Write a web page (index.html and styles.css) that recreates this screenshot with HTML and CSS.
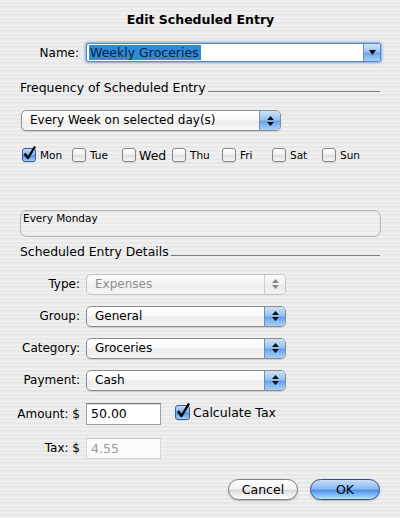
FILE: index.html
```html
<!DOCTYPE html>
<html>
<head>
<meta charset="utf-8">
<link rel="stylesheet" href="styles.css">
</head>
<body>
<div class="dialog">
  <h1 class="title">Edit Scheduled Entry</h1>

  <div class="name-row">
    <span class="name-lbl">Name:</span>
    <div class="combo">
      <span class="combo-text"><span class="sel">Weekly Groceries</span></span>
      <span class="combo-btn"><svg width="7" height="5" viewBox="0 0 7 5"><path d="M0 0H7L3.5 5Z" fill="#111"/></svg></span>
    </div>
  </div>

  <div class="section s1">
    <span class="section-title">Frequency of Scheduled Entry</span><span class="rule"></span>
  </div>

  <div class="popup freq">
    <span class="popup-text">Every Week on selected day(s)</span>
    <span class="popup-arrows"><svg width="7" height="10" viewBox="0 0 7 10"><path d="M3.5 0L7 4H0Z M0 6H7L3.5 10Z" fill="#111"/></svg></span>
  </div>

  <div class="days">
    <div class="day"><span class="cb checked"><svg class="tick" width="15" height="16" viewBox="0 0 15 16"><path d="M2.5 8.5 L6 13 L13 1.5" fill="none" stroke="#000" stroke-width="2.3" stroke-linejoin="round"/></svg></span><span class="day-lbl">Mon</span></div>
    <div class="day"><span class="cb"></span><span class="day-lbl">Tue</span></div>
    <div class="day"><span class="cb"></span><span class="day-lbl big">Wed</span></div>
    <div class="day"><span class="cb"></span><span class="day-lbl">Thu</span></div>
    <div class="day"><span class="cb"></span><span class="day-lbl">Fri</span></div>
    <div class="day"><span class="cb"></span><span class="day-lbl">Sat</span></div>
    <div class="day"><span class="cb"></span><span class="day-lbl">Sun</span></div>
  </div>

  <div class="summary">Every Monday</div>

  <div class="section s2">
    <span class="section-title">Scheduled Entry Details</span><span class="rule"></span>
  </div>

  <div class="form">
    <span class="lbl">Type:</span>
    <div class="popup disabled wide">
      <span class="popup-text">Expenses</span>
      <span class="popup-arrows"><svg width="7" height="10" viewBox="0 0 7 10"><path d="M3.5 0L7 4H0Z M0 6H7L3.5 10Z" fill="#888"/></svg></span>
    </div>

    <span class="lbl">Group:</span>
    <div class="popup wide">
      <span class="popup-text">General</span>
      <span class="popup-arrows"><svg width="7" height="10" viewBox="0 0 7 10"><path d="M3.5 0L7 4H0Z M0 6H7L3.5 10Z" fill="#111"/></svg></span>
    </div>

    <span class="lbl">Category:</span>
    <div class="popup wide">
      <span class="popup-text">Groceries</span>
      <span class="popup-arrows"><svg width="7" height="10" viewBox="0 0 7 10"><path d="M3.5 0L7 4H0Z M0 6H7L3.5 10Z" fill="#111"/></svg></span>
    </div>

    <span class="lbl">Payment:</span>
    <div class="popup wide">
      <span class="popup-text">Cash</span>
      <span class="popup-arrows"><svg width="7" height="10" viewBox="0 0 7 10"><path d="M3.5 0L7 4H0Z M0 6H7L3.5 10Z" fill="#111"/></svg></span>
    </div>

    <span class="lbl">Amount: $</span>
    <div class="amount-cell">
      <span class="field">50.00</span>
      <span class="calc"><span class="cb checked big-cb"><svg class="tick" width="16" height="17" viewBox="0 0 16 17"><path d="M3 9 L6.5 14 L14 1.5" fill="none" stroke="#000" stroke-width="2.4" stroke-linejoin="round"/></svg></span><span class="calc-lbl">Calculate Tax</span></span>
    </div>

    <span class="lbl">Tax: $</span>
    <div class="tax-cell">
      <span class="field disabled">4.55</span>
    </div>
  </div>

  <div class="buttons">
    <span class="btn cancel">Cancel</span>
    <span class="btn ok">OK</span>
  </div>
</div>
</body>
</html>
```

FILE: styles.css
```css
html, body {
  margin: 0;
  padding: 0;
}
body {
  width: 400px;
  height: 518px;
  overflow: hidden;
  background: repeating-linear-gradient(to bottom, #efefef 0, #efefef 2px, #e8e8e8 2px, #e8e8e8 4px);
  font-family: "DejaVu Sans", "Liberation Sans", sans-serif;
  font-size: 12px;
  color: #000;
}
.dialog {
  padding: 0 19px 0 20px;
}
.title {
  margin: 11px 0 0;
  font-size: 12.5px;
  font-weight: bold;
  line-height: 18px;
  text-align: center;
}

/* name row */
.name-row {
  display: flex;
  align-items: center;
  margin-top: 13px;
  height: 21px;
}
.name-lbl {
  width: 59px;
  text-align: right;
  margin-right: 7px;
}
.combo {
  flex: 1;
  display: flex;
  height: 19px;
  box-sizing: border-box;
  border: 1px solid #5f83b8;
  border-radius: 3px;
  background: #fff;
  box-shadow: 0 0 0 1px #9dbde4, 0 0 2px 2px #b3cdea;
}
.combo-text {
  flex: 1;
  padding-left: 2px;
  padding-top: 1px;
  line-height: 15px;
}
.sel {
  display: inline-block;
  background: #2e8ad9;
  color: #0a1d40;
  padding: 0 2px 0 1px;
  font-size: 12.5px;
}
.combo-btn {
  width: 16px;
  display: flex;
  align-items: center;
  justify-content: center;
  border-left: 1px solid #6d8fc0;
  border-radius: 0 2px 2px 0;
  background: linear-gradient(#d2e4f8, #9cc4f0 45%, #6ea6ea 55%, #a8d2fb);
}

/* section headers */
.section {
  display: flex;
  align-items: flex-start;
  height: 16px;
  line-height: 16px;
}
.s1 { margin-top: 17px; }
.s2 { margin-top: 7px; }
.section-title {
  font-size: 12.4px;
  white-space: nowrap;
}
.rule {
  flex: 1;
  height: 11px;
  margin-left: 2px;
  margin-right: 1px;
  border-bottom: 1px solid #7c7c7c;
}

/* popup buttons */
.popup {
  display: flex;
  height: 21px;
  box-sizing: border-box;
  border: 1px solid #8d8d8d;
  border-radius: 5px;
  overflow: hidden;
  background: linear-gradient(#ffffff, #f8f8f8 48%, #ececec 52%, #f6f6f6);
  box-shadow: 0 1px 1px rgba(0,0,0,0.12);
}
.popup-text {
  flex: 1;
  padding-left: 8px;
  line-height: 19px;
  font-size: 12px;
  white-space: nowrap;
}
.popup-arrows {
  width: 20px;
  display: flex;
  align-items: center;
  justify-content: center;
  border-left: 1px solid #6f90bf;
  background: linear-gradient(#cfe2f8, #98c2f0 45%, #6ba3ea 55%, #a7d3fc);
}
.popup.disabled {
  border-color: #c2c2c2;
  box-shadow: none;
  background: linear-gradient(#fbfbfb, #f4f4f4 50%, #eeeeee 52%, #f5f5f5);
}
.popup.disabled .popup-text { color: #8f8f8f; }
.popup.disabled .popup-arrows {
  border-left-color: #cfcfcf;
  background: linear-gradient(#fbfbfb, #f1f1f1 50%, #e8e8e8 52%, #f4f4f4);
}
.freq {
  margin-top: 14px;
  width: 260px;
  margin-left: 1px;
}
.wide {
  width: 200px;
}

/* days */
.days {
  display: flex;
  margin-top: 16px;
  height: 16px;
  padding-left: 2px;
}
.day {
  width: 50px;
  display: flex;
  align-items: center;
}
.cb {
  position: relative;
  width: 14px;
  height: 14px;
  box-sizing: border-box;
  border: 1px solid #878787;
  border-radius: 3px;
  background: linear-gradient(#ffffff, #f0f0f0 45%, #dedede 55%, #f7f7f7);
  box-shadow: 0 1px 1px rgba(0,0,0,0.1);
  flex: none;
}
.cb.checked {
  border-color: #35609d;
  background: linear-gradient(#c0d8f5, #86b5ec 45%, #5094e3 55%, #a3d1fb);
}
.tick {
  position: absolute;
  left: -1px;
  top: -4px;
}
.day-lbl {
  margin-left: 4px;
  font-size: 10.5px;
}
.day-lbl.big {
  font-size: 12.5px;
  margin-left: 3px;
}

/* summary */
.summary {
  margin-top: 47px;
  height: 27px;
  box-sizing: border-box;
  border: 1px solid #b5b5b5;
  border-radius: 7px;
  padding: 1px 2px;
  font-size: 10.5px;
  line-height: 13px;
  background: rgba(255,255,255,0.15);
  box-shadow: inset 0 1px 1px rgba(0,0,0,0.06);
}

/* form */
.form {
  margin-top: 14px;
  margin-left: -10px;
  display: grid;
  grid-template-columns: 70px auto;
  grid-template-rows: 20px 20px 20px 20px 23px 22px;
  column-gap: 6px;
  row-gap: 12px;
  align-items: center;
}
.lbl {
  text-align: right;
  white-space: nowrap;
  font-size: 12px;
}
.amount-cell, .tax-cell {
  display: flex;
  align-items: center;
  height: 100%;
}
.field {
  width: 75px;
  height: 22px;
  box-sizing: border-box;
  border: 1px solid #a0a0a0;
  border-top-color: #7b7b7b;
  background: #fff;
  padding-left: 4px;
  line-height: 20px;
  font-size: 12.5px;
  box-shadow: inset 0 1px 0 #dcdcdc;
}
.field.disabled {
  height: 21px;
  border-color: #d6d6d6;
  border-top-color: #c4c4c4;
  background: #fbfbfb;
  color: #9a9a9a;
  box-shadow: none;
  line-height: 19px;
}
.calc {
  display: flex;
  align-items: center;
  margin-left: 14px;
  align-self: flex-start;
  margin-top: 3px;
}
.big-cb {
  width: 15px;
  height: 15px;
}
.calc-lbl {
  margin-left: 3px;
  font-size: 12.5px;
}

/* buttons */
.buttons {
  display: flex;
  justify-content: flex-end;
  margin-top: 20px;
  margin-right: 1px;
  gap: 12px;
}
.btn {
  width: 70px;
  height: 21px;
  box-sizing: border-box;
  border-radius: 11px;
  text-align: center;
  line-height: 19px;
  font-size: 12.5px;
  box-shadow: 0 1px 2px rgba(0,0,0,0.25);
}
.cancel {
  border: 1px solid #7c7c7c;
  background: linear-gradient(#ffffff, #f3f3f3 45%, #dcdcdc 55%, #f4f4f4 85%, #ffffff);
}
.ok {
  border: 1px solid #2f4f92;
  background: linear-gradient(#c9def8, #8bbaf0 45%, #4d92e6 55%, #8cc6fb 85%, #c2e4ff);
}
```
